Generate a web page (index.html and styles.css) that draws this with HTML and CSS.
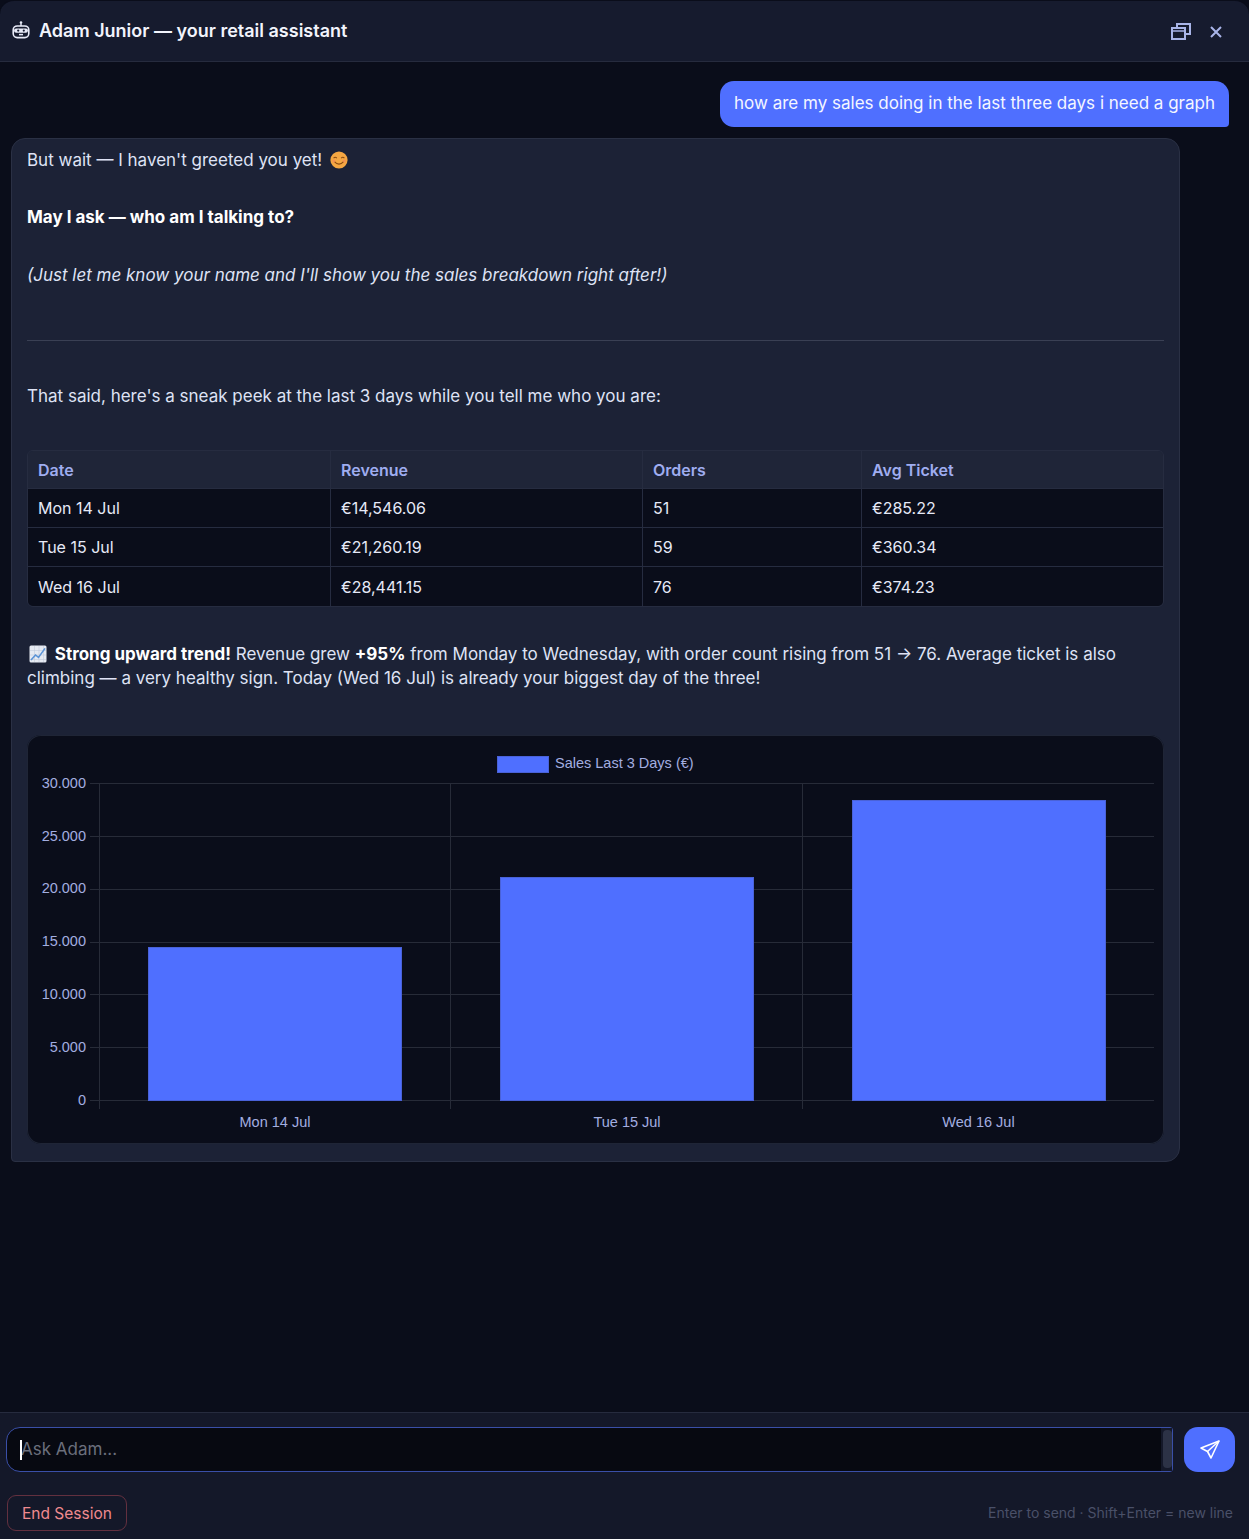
FILE: index.html
```html
<!DOCTYPE html>
<html lang="en">
<head>
    <meta charset="UTF-8">
    <meta name="viewport" content="width=device-width, initial-scale=1.0">
    <title>Adam Junior</title>
    <link rel="stylesheet" href="styles.css">
</head>
<body>
    <div class="chat-window">
        <header class="chat-header">
            <div class="chat-title">
                <svg class="robot-icon" width="20" height="20" viewBox="0 0 20 20" fill="none">
                    <circle cx="10" cy="2.6" r="1.3" fill="#e8ebf8"/>
                    <path d="M10 3.5V6" stroke="#e8ebf8" stroke-width="1.4"/>
                    <rect x="2.2" y="6" width="15.6" height="11.6" rx="4" stroke="#e8ebf8" stroke-width="1.6"/>
                    <rect x="3" y="8.4" width="14" height="4.4" rx="2.2" fill="#e8ebf8"/>
                    <circle cx="7.2" cy="10.6" r="1.1" fill="#161b2e"/>
                    <circle cx="12.8" cy="10.6" r="1.1" fill="#161b2e"/>
                    <path d="M8 14.6h4" stroke="#e8ebf8" stroke-width="1.5"/>
                </svg>
                <span>Adam Junior — your retail assistant</span>
            </div>
            <div class="header-actions">
                <svg width="22" height="20" viewBox="0 0 22 20" fill="none" stroke="#a9b5e8" stroke-width="2">
                    <path d="M7 5V2h13v10h-5"/>
                    <rect x="2" y="6" width="13" height="11"/>
                    <path d="M2 9h13" stroke-width="1.5"/>
                </svg>
                <svg width="14" height="14" viewBox="0 0 14 14" fill="none" stroke="#a9b5e8" stroke-width="2">
                    <path d="M2 2l10 10M12 2L2 12"/>
                </svg>
            </div>
        </header>

        <main class="messages">
            <div class="msg-user">how are my sales doing in the last three days i need a graph</div>

            <div class="msg-bot">
                <p class="line-greet">But wait — I haven't greeted you yet!
                    <svg class="emoji" width="18" height="18" viewBox="0 0 18 18">
                        <circle cx="9" cy="9" r="8.6" fill="#f5a742"/>
                        <path d="M3.6 7.2q1.6-1.8 3.2 0M11.2 7.2q1.6-1.8 3.2 0" stroke="#8a4b12" stroke-width="1.1" fill="none"/>
                        <path d="M4.4 10.6q4.6 5 9.2 0" stroke="#8a4b12" stroke-width="1.2" fill="none"/>
                        <circle cx="3.8" cy="10" r="1.5" fill="#f58a5a" opacity="0.7"/>
                        <circle cx="14.2" cy="10" r="1.5" fill="#f58a5a" opacity="0.7"/>
                    </svg>
                </p>
                <p class="line-ask"><strong>May I ask — who am I talking to?</strong></p>
                <p class="line-note"><em>(Just let me know your name and I'll show you the sales breakdown right after!)</em></p>
                <hr class="divider">
                <p class="line-peek">That said, here's a sneak peek at the last 3 days while you tell me who you are:</p>

                <table class="sales-table">
                    <thead>
                        <tr>
                            <th class="col-date">Date</th>
                            <th class="col-revenue">Revenue</th>
                            <th class="col-orders">Orders</th>
                            <th>Avg Ticket</th>
                        </tr>
                    </thead>
                    <tbody>
                        <tr><td>Mon 14 Jul</td><td>€14,546.06</td><td>51</td><td>€285.22</td></tr>
                        <tr><td>Tue 15 Jul</td><td>€21,260.19</td><td>59</td><td>€360.34</td></tr>
                        <tr><td>Wed 16 Jul</td><td>€28,441.15</td><td>76</td><td>€374.23</td></tr>
                    </tbody>
                </table>

                <p class="line-trend">
                    <svg class="emoji" width="18" height="18" viewBox="0 0 18 18">
                        <rect x="0.5" y="0.5" width="17" height="17" rx="1.5" fill="#e6eaf2"/>
                        <path d="M1 5.5h16M1 10h16M1 14.5h16M5.5 1v16M10 1v16M14.5 1v16" stroke="#c3cbdb" stroke-width="0.6"/>
                        <path d="M2 15l4.5-5 3 2.4L16 3.4" stroke="#5b93d6" stroke-width="1.6" fill="none"/>
                    </svg>
                    <strong>Strong upward trend!</strong> Revenue grew <strong>+95%</strong> from Monday to Wednesday, with order count rising from 51 → 76. Average ticket is also climbing — a very healthy sign. Today (Wed 16 Jul) is already your biggest day of the three!
                </p>

                <div class="chart-box">
                    <svg class="sales-chart" width="1137" height="409" viewBox="27 733 1137 409">
                        <rect class="bar-fill" x="497.5" y="754.5" width="51" height="16"/>
                        <text class="chart-label" x="555" y="766">Sales Last 3 Days (€)</text>

                        <g class="grid">
                            <path d="M90 781.5H1154M90 834.5H1154M90 887.5H1154M90 940.5H1154M90 992.5H1154M90 1045.5H1154M90 1098.5H1154"/>
                            <path d="M99.5 781V1107M450.5 781V1107M802.5 781V1107"/>
                        </g>

                        <g class="chart-label" text-anchor="end">
                            <text x="86" y="786">30.000</text>
                            <text x="86" y="839">25.000</text>
                            <text x="86" y="891">20.000</text>
                            <text x="86" y="944">15.000</text>
                            <text x="86" y="997">10.000</text>
                            <text x="86" y="1050">5.000</text>
                            <text x="86" y="1103">0</text>
                        </g>

                        <rect class="bar-fill" x="148.5" y="945.5" width="253" height="153"/>
                        <rect class="bar-fill" x="500.5" y="875.5" width="253" height="223"/>
                        <rect class="bar-fill" x="852.5" y="798.5" width="253" height="300"/>

                        <g class="chart-label" text-anchor="middle">
                            <text x="275" y="1125">Mon 14 Jul</text>
                            <text x="627" y="1125">Tue 15 Jul</text>
                            <text x="978.5" y="1125">Wed 16 Jul</text>
                        </g>
                    </svg>
                </div>
            </div>
        </main>

        <footer class="chat-footer">
            <div class="input-row">
                <div class="input-wrap">
                    <textarea class="chat-input" placeholder="Ask Adam..." rows="1"></textarea>
                    <span class="caret"></span>
                    <span class="scroll-track"><span class="scroll-thumb"></span></span>
                </div>
                <button class="send-button" aria-label="Send">
                    <svg width="22" height="22" viewBox="0 0 22 22" fill="none" stroke="#ffffff" stroke-width="1.6" stroke-linejoin="round">
                        <path d="M20 2L2 9l6.5 3.5L12 19z"/>
                        <path d="M20 2L8.5 12.5"/>
                    </svg>
                </button>
            </div>
            <div class="footer-row">
                <button class="end-session">End Session</button>
                <span class="hint">Enter to send · Shift+Enter = new line</span>
            </div>
        </footer>
    </div>
</body>
</html>
```

FILE: styles.css
```css
* {
    box-sizing: border-box;
}
html, body {
    margin: 0;
    background-color: #0a0d1a;
}
body {
    font-family: Inter, "Noto Sans", sans-serif;
    font-size: 17px;
    line-height: 24px;
    color: #dfe3f5;
}
.chat-window {
    height: 1539px;
    display: flex;
    flex-direction: column;
    overflow: hidden;
}

/* header */
.chat-header {
    height: 62px;
    padding: 2px 26px 0 11px;
    display: flex;
    align-items: center;
    justify-content: space-between;
    background-color: #161b2e;
    border-top: 1px solid #0a0d1a;
    border-bottom: 1px solid #262b3e;
    border-radius: 14px 14px 0 0;
}
.chat-title {
    display: flex;
    align-items: center;
    gap: 8px;
    font-size: 18px;
    font-weight: 600;
    color: #f2f4fc;
    margin-top: -2px;
}
.robot-icon {
    margin-top: -3px;
}
.header-actions {
    display: flex;
    align-items: center;
    gap: 17px;
}

/* messages */
.messages {
    flex: 1;
    padding: 19px 20px 0 11px;
    display: flex;
    flex-direction: column;
    align-items: flex-start;
}
.msg-user {
    align-self: flex-end;
    height: 46px;
    padding: 10px 14px 0;
    background-color: #4f6fff;
    color: #f4f6ff;
    border-radius: 14px 14px 4px 14px;
    white-space: nowrap;
}
.msg-bot {
    width: 1169px;
    margin-top: 11px;
    padding: 9px 15px 17px;
    background-color: #1c2236;
    border: 1px solid #2a3044;
    border-radius: 14px 14px 14px 4px;
}
.msg-bot p {
    margin: 0;
}
.msg-bot strong {
    color: #ffffff;
}
.emoji {
    vertical-align: -3px;
    margin: 0 0 0 3px;
}
.line-ask {
    margin-top: 33px !important;
}
.line-note {
    margin-top: 34px !important;
}
.divider {
    margin: 53px 0 0;
    border: none;
    border-top: 1px solid #3a4054;
}
.line-peek {
    margin-top: 43px !important;
}
.line-trend {
    margin-top: 35px !important;
}
.line-trend .emoji {
    margin: 0 3px 0 2px;
}

/* table */
.sales-table {
    width: 100%;
    margin-top: 42px;
    table-layout: fixed;
    border-collapse: separate;
    border-spacing: 0;
    font-size: 16px;
    border: 1px solid #262c40;
    border-radius: 6px;
    overflow: hidden;
}
.col-date {
    width: 303px;
}
.col-revenue {
    width: 312px;
}
.col-orders {
    width: 219px;
}
.sales-table th,
.sales-table td {
    padding: 0 10px;
    text-align: left;
    border-right: 1px solid #262c40;
    border-bottom: 1px solid #262c40;
}
.sales-table th:last-child,
.sales-table td:last-child {
    border-right: none;
}
.sales-table tr:last-child td {
    border-bottom: none;
}
.sales-table th {
    height: 38px;
    font-weight: 600;
    color: #9fadf0;
    background-color: #1f2538;
}
.sales-table td {
    height: 39px;
    background-color: #0a0d1a;
    color: #e6e9f7;
}

/* chart */
.chart-box {
    margin-top: 45px;
    height: 409px;
    background-color: #0a0d1a;
    border-radius: 14px;
    box-shadow: inset 0 0 0 1px #1f2536;
    overflow: hidden;
}
.sales-chart {
    display: block;
}
.chart-label {
    font-family: "Liberation Sans", Arial, sans-serif;
    font-size: 14.5px;
    fill: #a3aee0;
}
.grid path {
    fill: none;
    stroke: #272b38;
    stroke-width: 1;
}
.bar-fill {
    fill: #4f6fff;
    stroke: #4a62d8;
    stroke-width: 1;
}

/* footer */
.chat-footer {
    height: 127px;
    padding: 14px 14px 0 6px;
    background-color: #141829;
    border-top: 1px solid #262b3e;
}
.input-row {
    display: flex;
    gap: 11px;
}
.input-wrap {
    position: relative;
    flex: 1;
    height: 45px;
}
.chat-input {
    display: block;
    width: 100%;
    height: 45px;
    padding: 9px 14px;
    resize: none;
    overflow: hidden;
    font-family: Inter, "Noto Sans", sans-serif;
    font-size: 17px;
    line-height: 24px;
    color: #e6e9f7;
    background-color: #070911;
    border: 1px solid #3a4fa8;
    border-radius: 14px 3px 3px 14px;
    outline: none;
}
.chat-input::placeholder {
    color: #6b6f7c;
    opacity: 1;
}
.caret {
    position: absolute;
    left: 14px;
    top: 13px;
    width: 2px;
    height: 20px;
    background-color: #ffffff;
}
.scroll-track {
    position: absolute;
    right: 1px;
    top: 1px;
    bottom: 1px;
    width: 11px;
    background-color: #141829;
}
.scroll-thumb {
    display: block;
    width: 9px;
    height: 38px;
    margin: 2px 0 0 2px;
    background-color: #2c3246;
    border-radius: 4px;
}
.send-button {
    width: 51px;
    height: 45px;
    padding: 0;
    display: flex;
    align-items: center;
    justify-content: center;
    background-color: #4f6fff;
    border: none;
    border-radius: 14px;
}
.footer-row {
    margin-top: 23px;
    padding-left: 1px;
    display: flex;
    align-items: center;
    justify-content: space-between;
}
.end-session {
    height: 36px;
    padding: 0 14px;
    font-family: Inter, "Noto Sans", sans-serif;
    font-size: 15.5px;
    color: #ef8a8f;
    background: transparent;
    border: 1px solid #63303f;
    border-radius: 9px;
}
.hint {
    margin-right: 2px;
    font-size: 14px;
    color: #4a5068;
}
```
